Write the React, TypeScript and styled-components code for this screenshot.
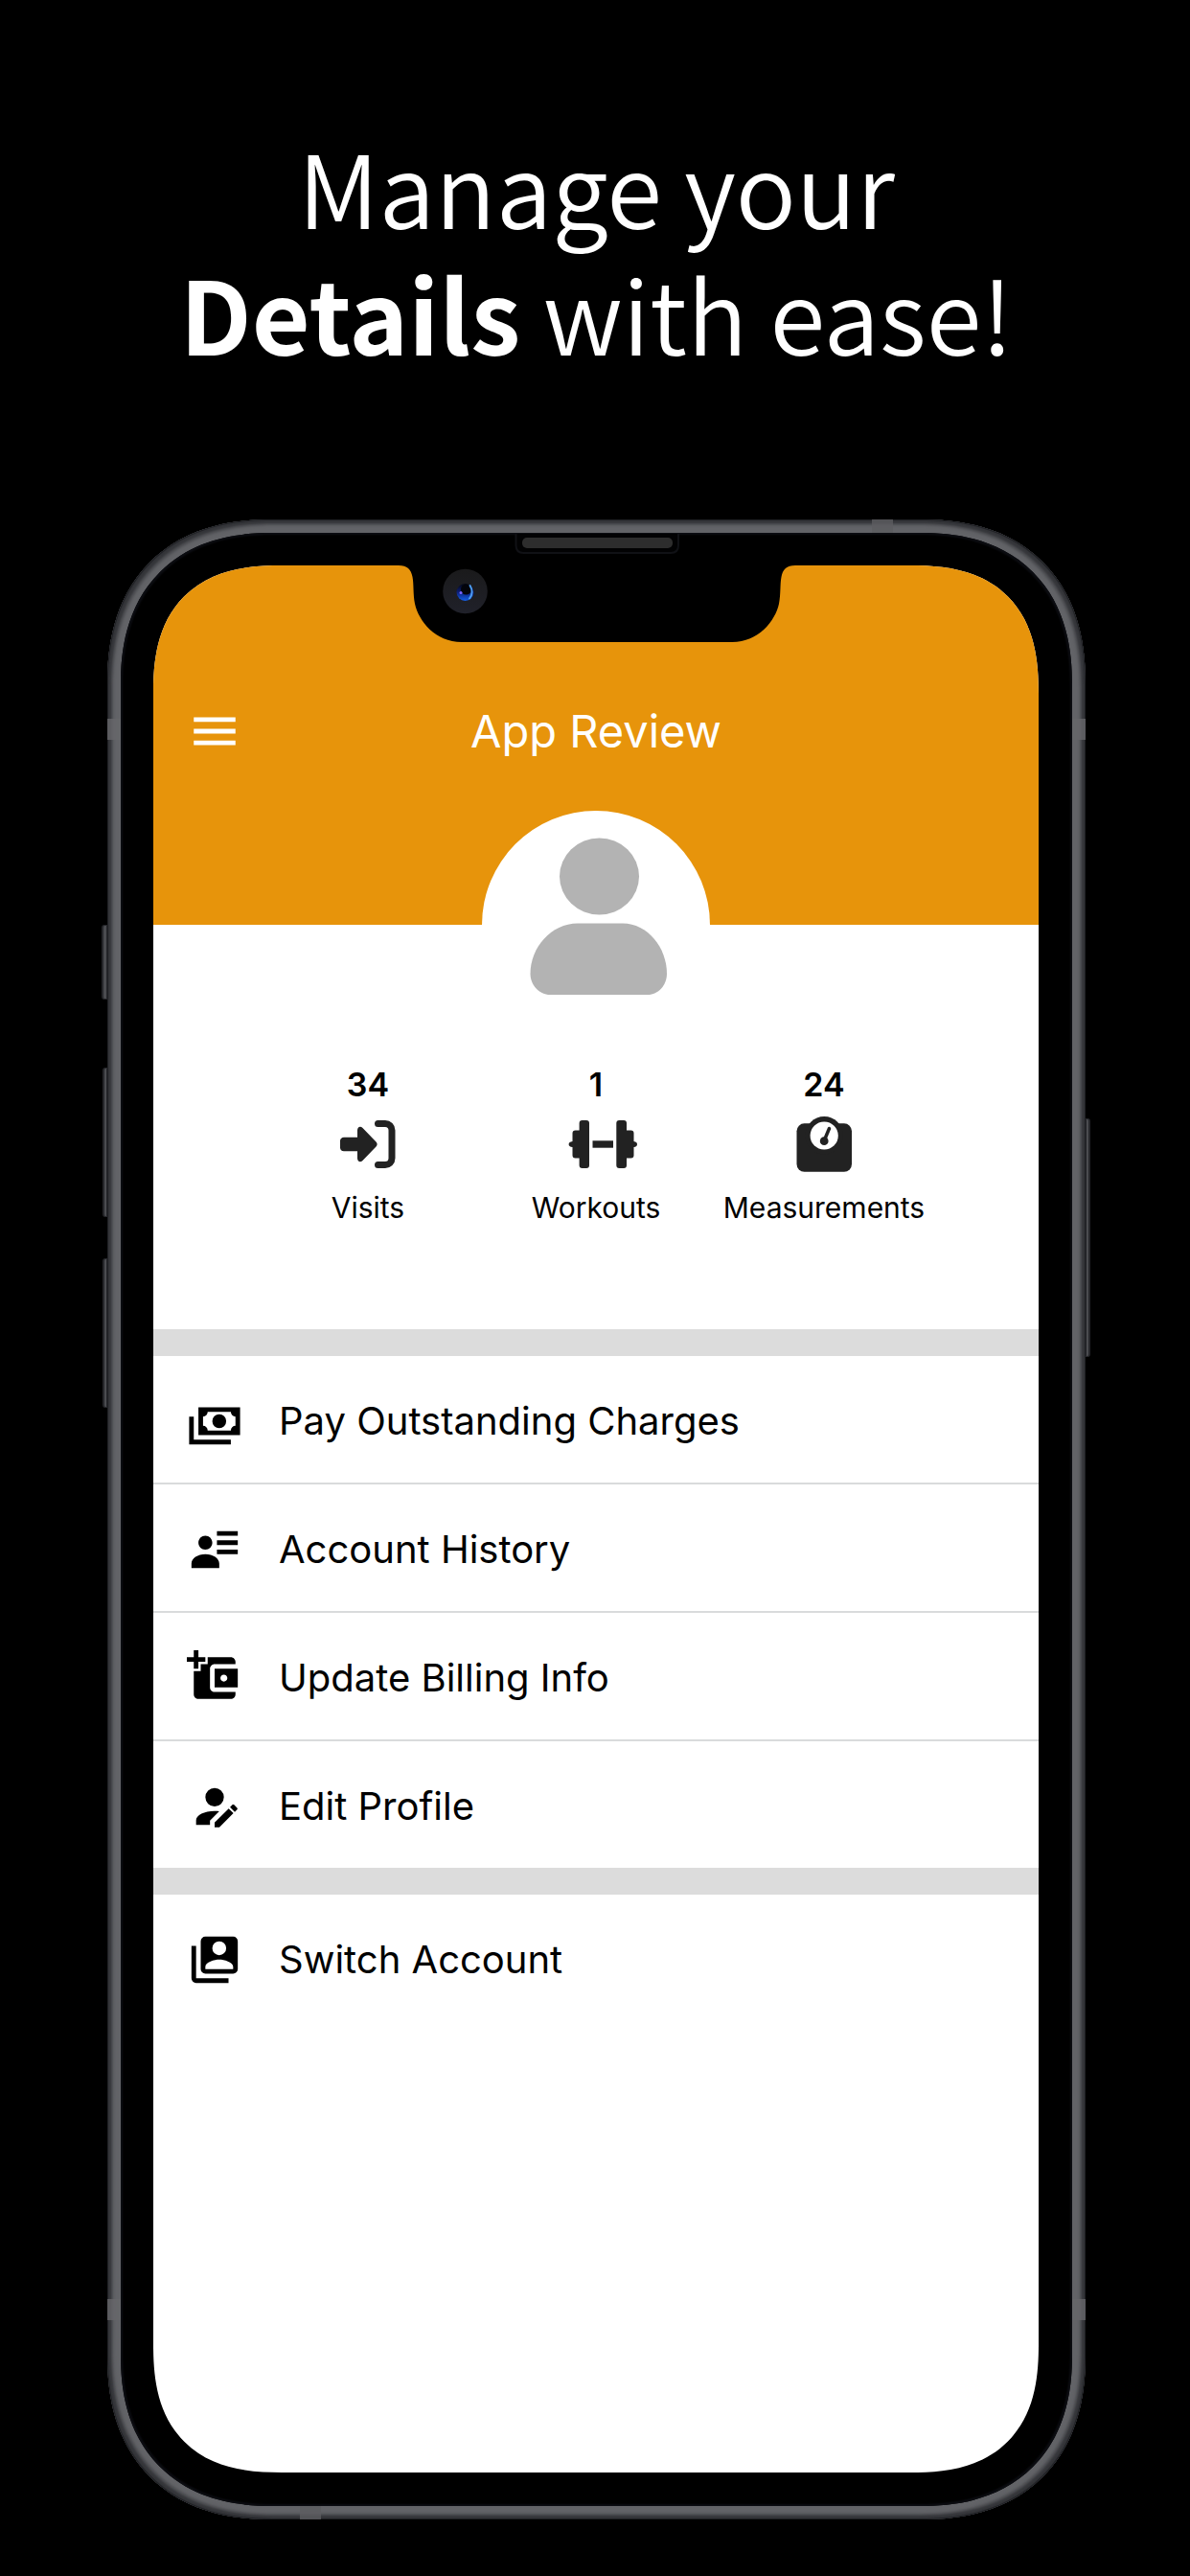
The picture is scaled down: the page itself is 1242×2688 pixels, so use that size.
import React from "react";
import styled, { createGlobalStyle } from "styled-components";
import { MdMenu } from "react-icons/md";

const GlobalStyle = createGlobalStyle`
  *, *::before, *::after { box-sizing: border-box; }
  body { margin: 0; background: #000; }
`;

const Page = styled.main`
  display: flex;
  flex-direction: column;
  min-height: 100vh;
  padding: 127px 109px 59px 112px;
  background: #000;
  font-family: Inter, "Liberation Sans", sans-serif;
  color: #000;
`;

const Headline = styled.h1`
  margin: 0 0 151px;
  color: #fff;
  font-family: "Noto Sans CJK SC", "Noto Sans", sans-serif;
  font-size: 105px;
  font-weight: 350;
  line-height: 132px;
  text-align: center;

  strong { font-weight: 700; }
`;

const Device = styled.div`
  position: relative;
  display: flex;
  flex: 1;
  flex-direction: column;
  padding: 14px;
  border-radius: 172px;
  corner-shape: superellipse(1.21);
  background: #626367;
  box-shadow:
    inset 0 0 1px 1px #1f2024,
    inset 0 0 2px 4px #35363a,
    inset 0 0 3px 6px #4b4c50;
`;

const Bezel = styled.div`
  position: relative;
  display: flex;
  flex: 1;
  flex-direction: column;
  padding: 34px 35px 35px 34px;
  border-radius: 158px;
  corner-shape: superellipse(1.21);
  background: #000;
  box-shadow: inset 0 0 2px 2px #0c0d12;
`;

const Screen = styled.div`
  flex: 1;
  overflow: hidden;
  border-radius: 134px;
  corner-shape: superellipse(1.33);
  background: #fff;
`;

const SideKey = styled.span<{ $side: "left" | "right"; $top: number; $height: number; $depth: number }>`
  position: absolute;
  ${(p) => p.$side}: ${(p) => -p.$depth}px;
  top: ${(p) => p.$top}px;
  width: ${(p) => p.$depth}px;
  height: ${(p) => p.$height}px;
  border: 1px solid #25262a;
  border-${(p) => p.$side}-width: 2px;
  border-radius: ${(p) => (p.$side === "left" ? "3px 0 0 3px" : "0 3px 3px 0")};
  background: #4b4c50;
`;

const SideBand = styled.span<{ $side: "left" | "right"; $edge: "top" | "bottom" }>`
  position: absolute;
  ${(p) => p.$side}: 0;
  ${(p) => p.$edge}: 208px;
  width: 14px;
  height: 22px;
  background: #66676a;
  opacity: 0.8;
`;

const EndBand = styled.span<{ $edge: "top" | "bottom" }>`
  position: absolute;
  ${(p) => p.$edge}: 0;
  ${(p) => (p.$edge === "top" ? "right" : "left")}: 201px;
  width: 22px;
  height: 14px;
  background: #5c5d60;
  opacity: 0.8;
`;

const NotchArt = styled.svg`
  position: absolute;
  top: 0;
  left: 50%;
  width: 414px;
  height: 116px;
  margin-left: -207px;
`;

const Header = styled.header`
  height: 375px;
  padding: 144px 35px 0;
  background: #e7940b;
  color: #fff;
`;

const Toolbar = styled.div`
  display: grid;
  grid-template-columns: 1fr auto 1fr;
  align-items: center;
`;

const MenuButton = styled.button`
  display: flex;
  width: 58px;
  padding: 0;
  border: 0;
  background: none;
  color: inherit;
`;

const Title = styled.h2`
  margin: 0;
  font-size: 47px;
  font-weight: 400;
  line-height: 58px;
`;

const Avatar = styled.div`
  width: 238px;
  height: 238px;
  margin: -119px auto 28px;
  border-radius: 50%;
  background: #fff;

  svg { display: block; }
`;

const Stats = styled.ul`
  display: grid;
  grid-template-columns: repeat(3, 238px);
  justify-content: center;
  margin: 0;
  padding: 0 0 109px;
  list-style: none;
`;

const Stat = styled.li`
  display: flex;
  flex-direction: column;
  align-items: center;
`;

const StatValue = styled.strong`
  font-size: 34px;
  font-weight: 600;
  line-height: 40px;
`;

const StatArt = styled.svg`
  width: 86px;
  height: 58px;
  margin: 13px 0 19px;
  color: #222;
`;

const StatLabel = styled.span`
  font-size: 30px;
  line-height: 36px;
`;

const Menu = styled.ul`
  margin: 0;
  padding: 0;
  border-top: 28px solid #dcdcdc;
  list-style: none;
`;

const MenuItem = styled.li`
  & + & { border-top: 2px solid #d9dbdc; }
`;

const MenuRow = styled.button`
  display: flex;
  align-items: center;
  gap: 38px;
  width: 100%;
  height: 132px;
  padding: 3px 35px 0;
  border: 0;
  background: #fff;
  color: inherit;
  font: 400 40px/48px Inter, "Liberation Sans", sans-serif;
  text-align: left;
`;

const RowIcon = styled.svg`
  flex: none;
  width: 58px;
  height: 58px;
`;

const icons = {
  cash: "M5,6H23V18H5V6M14,9A3,3 0 0,1 17,12A3,3 0 0,1 14,15A3,3 0 0,1 11,12A3,3 0 0,1 14,9M9,8A2,2 0 0,1 7,10V14A2,2 0 0,1 9,16H19A2,2 0 0,1 21,14V10A2,2 0 0,1 19,8H9M1,10H3V20H19V22H1V10Z",
  history:
    "M11 9C11 10.66 9.66 12 8 12C6.34 12 5 10.66 5 9C5 7.34 6.34 6 8 6C9.66 6 11 7.34 11 9M14 20H2V18C2 15.79 4.69 14 8 14C11.31 14 14 15.79 14 18M22 12V14H13V12M22 8V10H13V8M22 4V6H13V4Z",
  wallet:
    "M3 0V3H0V5H3V8H5V5H8V3H5V0H3M9 3V6H6V9H3V19C3 20.1 3.89 21 5 21H19C20.11 21 21 20.11 21 19V18H12C10.9 18 10 17.11 10 16V8C10 6.9 10.89 6 12 6H21V5C21 3.9 20.11 3 19 3H9M12 8V16H22V8H12M16 10.5C16.83 10.5 17.5 11.17 17.5 12C17.5 12.83 16.83 13.5 16 13.5C15.17 13.5 14.5 12.83 14.5 12C14.5 11.17 15.17 10.5 16 10.5Z",
  edit: "M21.7,13.35L20.7,14.35L18.65,12.3L19.65,11.3C19.86,11.08 20.21,11.08 20.42,11.3L21.7,12.58C21.92,12.79 21.92,13.14 21.7,13.35M12,18.94L18.06,12.88L20.11,14.93L14.06,21H12V18.94M12,14C7.58,14 4,15.79 4,18V20H10V18.11L14,14.11C13.34,14.03 12.67,14 12,14M12,4A4,4 0 0,0 8,8A4,4 0 0,0 12,12A4,4 0 0,0 16,8A4,4 0 0,0 12,4Z",
  accounts:
    "M4,6H2V20A2,2 0 0,0 4,22H18V20H4V6M20,2A2,2 0 0,1 22,4V16A2,2 0 0,1 20,18H8A2,2 0 0,1 6,16V4A2,2 0 0,1 8,2H20M17,7A3,3 0 0,0 14,4A3,3 0 0,0 11,7A3,3 0 0,0 14,10A3,3 0 0,0 17,7M8,15V16H20V15C20,13 16,11.9 14,11.9C12,11.9 8,13 8,15Z",
};

type MenuEntry = { icon: keyof typeof icons; label: string };

const menuGroups: MenuEntry[][] = [
  [
    { icon: "cash", label: "Pay Outstanding Charges" },
    { icon: "history", label: "Account History" },
    { icon: "wallet", label: "Update Billing Info" },
    { icon: "edit", label: "Edit Profile" },
  ],
  [{ icon: "accounts", label: "Switch Account" }],
];

const VisitsArt = () => (
  <StatArt viewBox="0 0 86 58" aria-hidden="true">
    <path
      d="M18 21.700H32V14.500C32 11 35 9.500 37.500 12L51.500 26.500C53 28 53 30 51.500 31.500L37.500 46C35 48.500 32 47 32 43.500V36.300H18C15.500 36.300 14 34.500 14 32.500V25.500C14 23.500 15.500 21.700 18 21.700Z"
      fill="currentColor"
    />
    <path
      d="M53.500 7.500H61C65 7.500 68 10.500 68 14.500V43.500C68 47.500 65 50.500 61 50.500H53.500"
      fill="none"
      stroke="currentColor"
      strokeWidth="7"
      strokeLinecap="round"
    />
  </StatArt>
);

const WorkoutsArt = () => (
  <StatArt viewBox="0 0 86 58" fill="currentColor" aria-hidden="true">
    <rect x="25.600" y="4" width="10.400" height="50" rx="3" />
    <path d="M26 14.500H21.500Q18.500 14.500 18.500 17.500V26Q14.600 26.500 14.600 29T18.500 32V40.500Q18.500 43.500 21.500 43.500H26Z" />
    <rect x="39.500" y="25.300" width="21.500" height="7.400" />
    <rect x="64.300" y="4" width="10.700" height="50" rx="3" />
    <path d="M74.500 14.500H79.500Q82.500 14.500 82.500 17.500V26Q86 26.500 86 29T82.500 32V40.500Q82.500 43.500 79.500 43.500H74.500Z" />
  </StatArt>
);

const MeasurementsArt = () => (
  <StatArt viewBox="0 0 86 58" aria-hidden="true">
    <rect x="14.500" y="7.300" width="57.500" height="50.500" rx="8" fill="currentColor" />
    <circle cx="43.200" cy="19.700" r="19.700" fill="currentColor" />
    <circle cx="43.200" cy="20" r="14.600" fill="#fff" />
    <circle cx="43.200" cy="25.700" r="4.400" fill="currentColor" />
    <path d="M43.500 24.500L48.500 12.500" stroke="currentColor" strokeWidth="3.500" strokeLinecap="round" />
  </StatArt>
);

const stats = [
  { value: 34, label: "Visits", Art: VisitsArt },
  { value: 1, label: "Workouts", Art: WorkoutsArt },
  { value: 24, label: "Measurements", Art: MeasurementsArt },
];

const Notch = () => (
  <NotchArt viewBox="0 0 414 116" aria-hidden="true">
    <defs>
      <linearGradient id="camera-ring" x1="0" y1="0" x2="0" y2="1">
        <stop offset="0" stopColor="#1a1a1b" />
        <stop offset="1" stopColor="#20212a" />
      </linearGradient>
      <linearGradient id="camera-lens" x1="0" y1="0" x2="0" y2="1">
        <stop offset="0" stopColor="#04060f" />
        <stop offset="0.500" stopColor="#0c1f78" />
        <stop offset="1" stopColor="#1560e8" />
      </linearGradient>
    </defs>
    <path
      d="M0 34C9 34 13 38 14.500 46C16 54 15 64 17 74C21 92 38 114 66 114H348C376 114 393 92 397 74C399 64 398 54 399.500 46C401 38 405 34 414 34V32H0Z"
      fill="#000"
    />
    <path d="M122.500 1V13Q122.500 21 130.500 21H284Q292 21 292 13V1" fill="#020203" stroke="#101115" strokeWidth="2" />
    <rect x="129" y="5" width="157" height="11" rx="5" fill="#2d2d2d" />
    <circle cx="69.500" cy="61" r="23.300" fill="url(#camera-ring)" />
    <circle cx="69.500" cy="62" r="9" fill="url(#camera-lens)" />
    <circle cx="70.500" cy="59" r="5.500" fill="#03040b" />
    <path d="M74.500 55Q79 62 74 68.500" fill="none" stroke="#4d9cf0" strokeWidth="2" strokeLinecap="round" />
    <circle cx="65" cy="62.500" r="1.500" fill="#7a63ff" />
  </NotchArt>
);

export default function App() {
  return (
    <>
      <GlobalStyle />
      <Page>
        <Headline>
          Manage your
          <br />
          <strong>Details</strong> with ease!
        </Headline>
        <Device>
          <SideKey $side="left" $top={423} $height={78} $depth={6} />
          <SideKey $side="left" $top={572} $height={156} $depth={5} />
          <SideKey $side="left" $top={771} $height={156} $depth={5} />
          <SideKey $side="right" $top={625} $height={249} $depth={5} />
          <SideBand $side="left" $edge="top" />
          <SideBand $side="right" $edge="top" />
          <SideBand $side="left" $edge="bottom" />
          <SideBand $side="right" $edge="bottom" />
          <EndBand $edge="top" />
          <EndBand $edge="bottom" />
          <Bezel>
            <Screen>
              <Header>
                <Toolbar>
                  <MenuButton type="button" aria-label="Open menu">
                    <MdMenu size={58} />
                  </MenuButton>
                  <Title>App Review</Title>
                </Toolbar>
              </Header>
              <Avatar>
                <svg width="238" height="238" viewBox="0 0 238 238" role="img" aria-label="Profile picture" fill="#b3b3b3">
                  <ellipse cx="122.500" cy="68.500" rx="41.500" ry="40" />
                  <path d="M100 117.500H147C173 117.500 193 143 193 170C193 182 184 192 173 192H71C60 192 50.500 182 50.500 170C50.500 143 72 117.500 100 117.500Z" />
                </svg>
              </Avatar>
              <Stats>
                {stats.map(({ value, label, Art }) => (
                  <Stat key={label}>
                    <StatValue>{value}</StatValue>
                    <Art />
                    <StatLabel>{label}</StatLabel>
                  </Stat>
                ))}
              </Stats>
              <nav>
                {menuGroups.map((group) => (
                  <Menu key={group[0].label}>
                    {group.map(({ icon, label }) => (
                      <MenuItem key={label}>
                        <MenuRow type="button">
                          <RowIcon viewBox="0 0 24 24" fill="currentColor" fillRule="evenodd" aria-hidden="true">
                            <path d={icons[icon]} />
                          </RowIcon>
                          {label}
                        </MenuRow>
                      </MenuItem>
                    ))}
                  </Menu>
                ))}
              </nav>
            </Screen>
            <Notch />
          </Bezel>
        </Device>
      </Page>
    </>
  );
}
